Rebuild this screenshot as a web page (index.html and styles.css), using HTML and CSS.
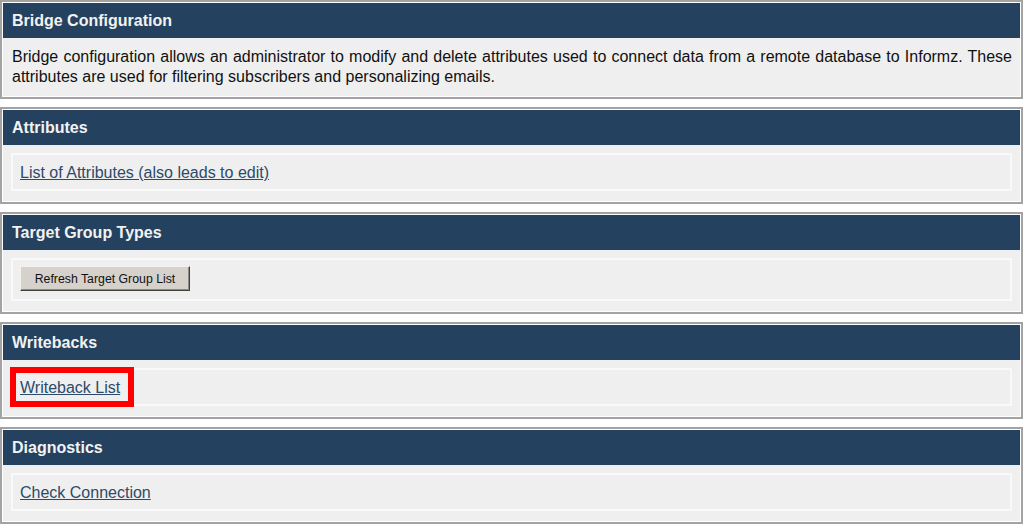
FILE: index.html
```html
<!DOCTYPE html>
<html lang="en">
<head>
<meta charset="utf-8">
<title>Bridge Configuration</title>
<link rel="stylesheet" href="styles.css">
</head>
<body>
<div class="page">
  <section class="panel">
    <h2 class="panel-head">Bridge Configuration</h2>
    <div class="panel-body intro">
      <p>Bridge configuration allows an administrator to modify and delete attributes used to connect data from a remote database to Informz. These attributes are used for filtering subscribers and personalizing emails.</p>
    </div>
  </section>

  <section class="panel">
    <h2 class="panel-head">Attributes</h2>
    <div class="panel-body">
      <div class="inner"><a href="#" class="link">List of Attributes (also leads to edit)</a></div>
    </div>
  </section>

  <section class="panel">
    <h2 class="panel-head">Target Group Types</h2>
    <div class="panel-body">
      <div class="inner inner-btn"><button type="button" class="btn">Refresh Target Group List</button></div>
    </div>
  </section>

  <section class="panel">
    <h2 class="panel-head">Writebacks</h2>
    <div class="panel-body">
      <div class="inner"><span class="highlight"><a href="#" class="link">Writeback List</a></span></div>
    </div>
  </section>

  <section class="panel">
    <h2 class="panel-head">Diagnostics</h2>
    <div class="panel-body">
      <div class="inner"><a href="#" class="link">Check Connection</a></div>
    </div>
  </section>
</div>
</body>
</html>
```

FILE: styles.css
```css
html, body {
  margin: 0;
  padding: 0;
  background: #ffffff;
}

body {
  font-family: "Liberation Sans", Arial, sans-serif;
  color: #111111;
}

.page {
  display: flex;
  flex-direction: column;
  gap: 8px;
  width: 1023px;
}

.panel {
  border: 2px solid #a3a3a3;
  padding: 1px;
  background: #ffffff;
}

.panel-head {
  margin: 0;
  height: 35px;
  line-height: 35px;
  padding: 0 9px;
  background: #24425f;
  color: #f2f2f2;
  font-size: 16px;
  font-weight: bold;
}

.panel-body {
  background: #efefef;
  padding: 8px 8px 10px 8px;
}

.panel-body.intro {
  padding: 9px 8px 9px 9px;
}

.intro p {
  margin: 0;
  font-size: 16px;
  line-height: 20px;
  text-align: justify;
}

.inner {
  border: 2px solid #f9f9f9;
  padding: 9px 7px 7px 7px;
  line-height: 18px;
  font-size: 16px;
}

.inner-btn {
  padding: 6px 7px 8px 7px;
  line-height: normal;
}

.link {
  color: #2c4a6b;
  text-decoration: underline;
}

.btn {
  display: block;
  width: 170px;
  height: 25px;
  margin: 0;
  padding: 0;
  font-family: "Liberation Sans", Arial, sans-serif;
  font-size: 12.3px;
  color: #111111;
  background: #d6d2cb;
  border: 1px solid;
  border-color: #f4f2ee #404040 #404040 #f4f2ee;
  box-shadow: inset -1px -1px 0 #8e8a84;
}

.highlight {
  position: relative;
  display: inline-block;
}

.highlight::after {
  content: "";
  position: absolute;
  top: -12px;
  left: -10px;
  right: -14px;
  bottom: -10px;
  border: 6px solid #ff0000;
  pointer-events: none;
}
```
